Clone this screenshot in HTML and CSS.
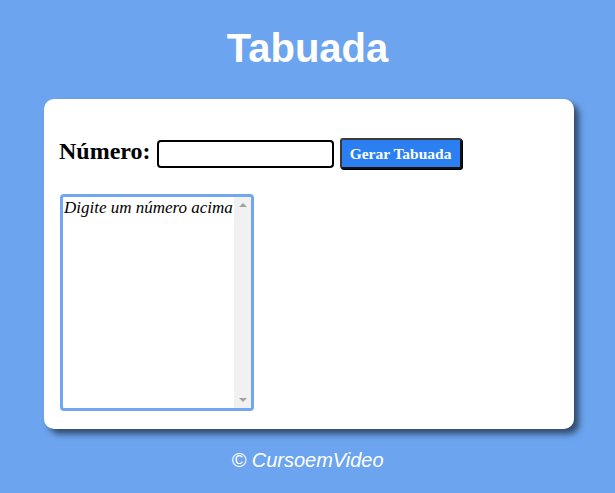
FILE: index.html
```html
<!DOCTYPE html>
<html lang="pt-BR">
<head>
<meta charset="UTF-8">
<title>Tabuada</title>
<link rel="stylesheet" href="styles.css">
</head>
<body>
<header class="top">
  <h1 class="title">Tabuada</h1>
</header>
<section class="card">
  <div class="row">
    <span class="label">Número:</span>
    <input class="num" type="text">
    <button class="btn" type="button">Gerar Tabuada</button>
  </div>
  <div class="listbox">
    <div class="options">
      <div class="opt">Digite um número acima</div>
    </div>
    <div class="sbar">
      <span class="arr up"></span>
      <span class="arr down"></span>
    </div>
  </div>
</section>
<footer class="foot">
  <p class="copy">&copy; CursoemVideo</p>
</footer>
</body>
</html>
```
FILE: styles.css
```css
html, body {
  margin: 0;
  padding: 0;
}
body {
  background: #6ca4ef;
  width: 615px;
  height: 493px;
  overflow: hidden;
  font-family: "Liberation Serif", "Times New Roman", serif;
}
.top {
  text-align: center;
}
.title {
  margin: 25px 0 28px;
  font-family: "Liberation Sans", Arial, sans-serif;
  font-weight: bold;
  font-size: 40px;
  line-height: 46px;
  color: #ffffff;
}
.card {
  box-sizing: border-box;
  width: 530px;
  height: 330px;
  margin: 0 0 0 44px;
  background: #ffffff;
  border-radius: 10px;
  padding: 39px 15px 17px 15px;
  box-shadow: 5px 5px 6px rgba(0, 0, 0, 0.55);
}
.row {
  display: flex;
  align-items: center;
  height: 31px;
}
.label {
  font-weight: bold;
  font-size: 24px;
  color: #000;
  margin: 0 6px 4px 0;
}
.num {
  box-sizing: border-box;
  width: 177px;
  height: 28px;
  border: 2px solid #000;
  border-radius: 4px;
  background: #fff;
  margin: 0 6px 0 0;
  padding: 0 4px;
}
.btn {
  box-sizing: border-box;
  height: 31px;
  width: 122px;
  padding: 0 6px;
  margin: 0;
  background: #2b7ff0;
  color: #fff;
  font-family: "Liberation Serif", "Times New Roman", serif;
  font-weight: bold;
  font-size: 15.5px;
  border: 2px solid #3a3a3a;
  border-right-color: #111;
  border-bottom-color: #111;
  border-radius: 3px;
  box-shadow: 1px 1px 0 #000;
}
.listbox {
  box-sizing: border-box;
  margin: 25px 0 0 1px;
  width: 194px;
  height: 217px;
  border: 3px solid #70a6f2;
  border-radius: 4px;
  display: flex;
  background: #fff;
}
.options {
  flex: 1;
  padding: 1px 0 0 1px;
  overflow: hidden;
}
.opt {
  font-style: italic;
  font-size: 17px;
  line-height: 19px;
  color: #000;
  white-space: nowrap;
}
.sbar {
  width: 17px;
  background: #f1f1f1;
  display: flex;
  flex-direction: column;
  justify-content: space-between;
  align-items: center;
  padding: 6px 0;
}
.arr {
  width: 0;
  height: 0;
  border-left: 4px solid transparent;
  border-right: 4px solid transparent;
}
.up {
  border-bottom: 4px solid #a3a3a3;
}
.down {
  border-top: 4px solid #a3a3a3;
}
.foot {
  text-align: center;
}
.copy {
  margin: 20px 0 0;
  font-family: "Liberation Sans", Arial, sans-serif;
  font-style: italic;
  font-size: 20px;
  line-height: 23px;
  color: #fff;
}
```
